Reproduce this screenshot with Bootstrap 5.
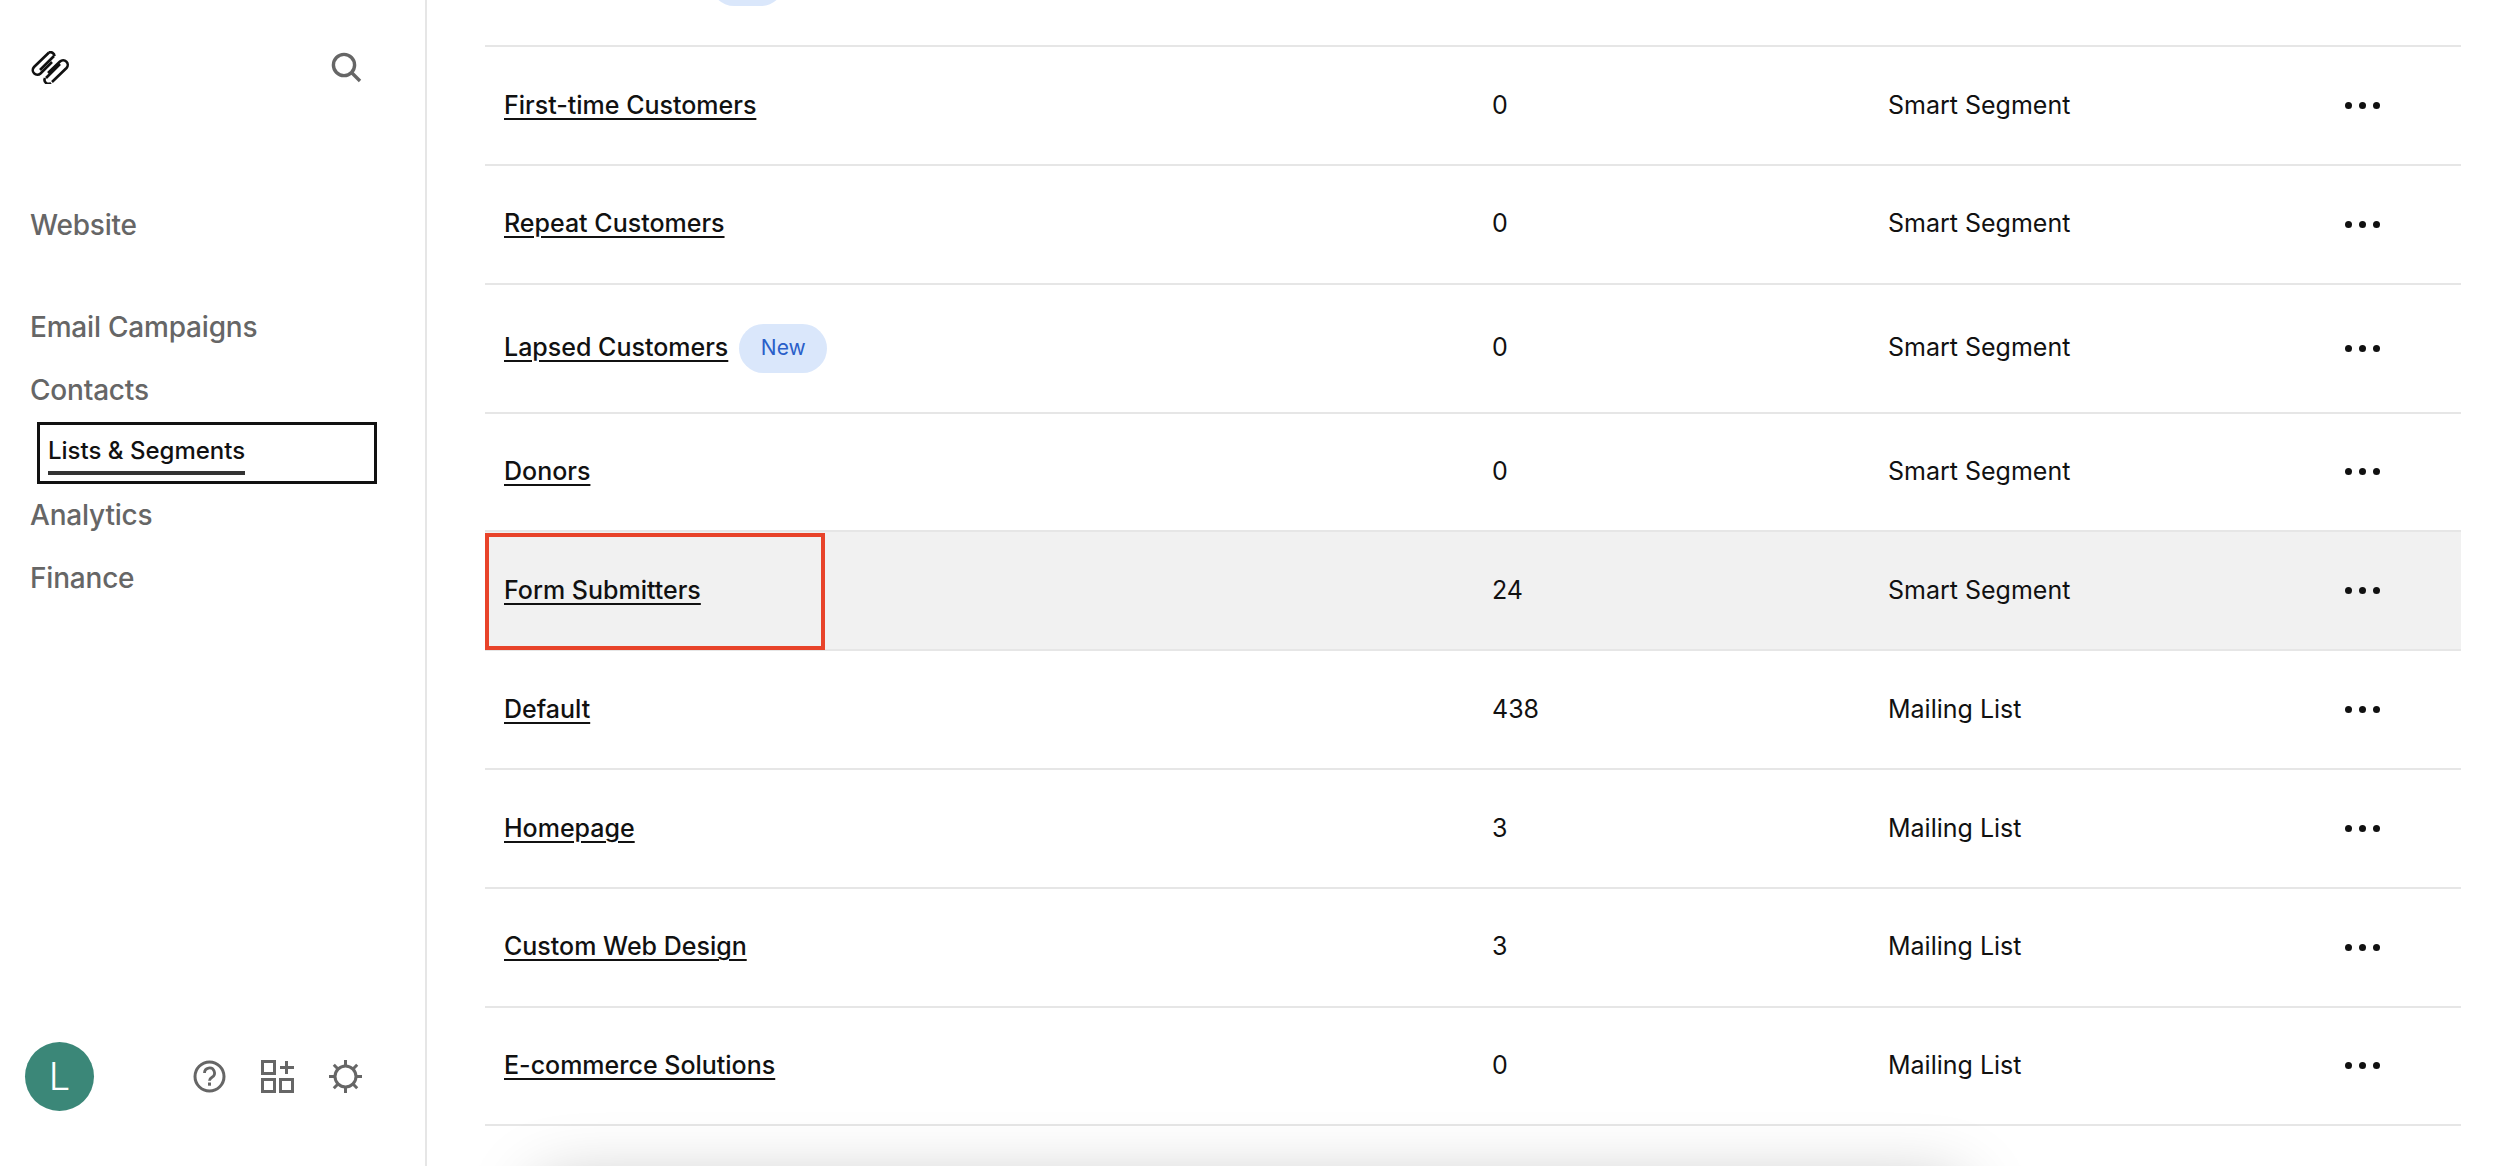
<!DOCTYPE html>
<html lang="en">
<head>
  <meta charset="UTF-8" />
  <meta name="viewport" content="width=device-width, initial-scale=1.0">
  <title>Lists &amp; Segments</title>
  <link href="https://cdn.jsdelivr.net/npm/bootstrap@5.3.0/dist/css/bootstrap.min.css" rel="stylesheet">
  <style>
    body {
      font-family: Inter, "Liberation Sans", sans-serif;
      color: #111;
      background: #fff;
      height: 100vh;
      overflow: hidden;
    }

    /* Sidebar */
    .side-panel {
      width: 427px;
      height: 100vh;
      border-right: 2px solid #e6e6e6;
      padding: 51px 0 55px 0;
      flex-shrink: 0;
    }
    .side-top { padding: 0 63px 0 30px; height: 33px; }
    .side-links { margin-top: 110px; }
    .side-link {
      display: block;
      height: 63px;
      line-height: 63px;
      margin-left: 30px;
      font-size: 28px;
      font-weight: 500;
      color: #666;
      text-decoration: none;
      letter-spacing: -0.2px;
    }
    .side-gap { margin-top: 39px; }
    .side-focus {
      margin: 0 0 0 37px;
      width: 340px;
      height: 62px;
      border: 3px solid #111;
      padding: 0 8px;
      display: block;
      color: #111;
      font-size: 24px;
      font-weight: 500;
      line-height: 52px;
      text-decoration: none;
    }
    .side-focus span {
      display: inline-block;
      height: 50px;
      border-bottom: 4px solid #333;
    }
    .side-foot { padding: 0 63px 0 25px; margin-top: auto; }
    .side-avatar {
      width: 69px;
      height: 69px;
      background: #3b8778;
      color: #fff;
      font-size: 38px;
      font-weight: 300;
    }
    .foot-icons { gap: 35px; }

    /* Segment table */
    .seg-main { padding: 0 39px 0 58px; }
    .seg-row {
      height: 118.8px;
      border-bottom: 2px solid #e6e6e6;
      font-size: 25px;
      position: relative;
    }
    .seg-row-clip { height: 47px; overflow: hidden; align-items: flex-start; }
    .seg-row-tall { height: 129px; }
    .seg-row-active { background: #f1f1f1; }
    .seg-name { width: 1007px; padding-left: 19px; flex-shrink: 0; }
    .seg-name a {
      color: #111;
      font-weight: 500;
      text-decoration: underline;
      text-decoration-thickness: 2px;
      text-underline-offset: 4px;
    }
    .seg-count { width: 396px; flex-shrink: 0; }
    .seg-more { width: 116px; flex-shrink: 0; gap: 7px; }
    .seg-dot { width: 7px; height: 7px; border-radius: 50%; background: #111; }
    .seg-pill {
      background: #dae7fb;
      color: #2a5fc9;
      font-size: 21px;
      width: 88px;
      height: 49px;
      margin-left: 11px;
      border-radius: 25px;
    }
    .seg-pill-cut { width: 75px; margin: -43px 0 0 225px; }
    .red-box {
      position: absolute;
      left: 0;
      top: 1px;
      width: 340px;
      height: 117px;
      border: 4px solid #e8432a;
    }
    .fade-shadow {
      position: fixed;
      left: 560px;
      top: 1206px;
      width: 1380px;
      height: 60px;
      box-shadow: 0 0 70px 20px rgba(0, 0, 0, 0.28);
    }
  </style>
</head>
<body>
  <div class="d-flex">
    <!-- Sidebar -->
    <nav class="side-panel d-flex flex-column">
      <div class="side-top d-flex justify-content-between align-items-center">
        <svg width="40" height="33" viewBox="0 0 40 33" fill="none" stroke="#111" stroke-width="2.6" stroke-linecap="butt">
          <path d="M19 1.5 L4 16 a4.6 4.6 0 0 0 6.5 6.5 L22 11"/>
          <path d="M24 5 L10 19"/>
          <path d="M16 27 L30 13"/>
          <path d="M18 22 L30 10.5 a4.6 4.6 0 0 1 6.5 6.5 L22 31"/>
          <path d="M21 32 a4 4 0 0 1 -6 -5"/>
          <path d="M19 1.5 a4 4 0 0 1 5.5 3.5"/>
        </svg>
        <svg width="31" height="31" viewBox="0 0 31 31" fill="none" stroke="#666" stroke-width="3.4">
          <circle cx="13" cy="13" r="10.6"/>
          <path d="M20.5 20.5 L29 29"/>
        </svg>
      </div>
      <div class="side-links">
        <a class="side-link" href="#">Website</a>
        <a class="side-link side-gap" href="#">Email Campaigns</a>
        <a class="side-link" href="#">Contacts</a>
        <a class="side-focus" href="#"><span>Lists &amp; Segments</span></a>
        <a class="side-link" href="#">Analytics</a>
        <a class="side-link" href="#">Finance</a>
      </div>
      <div class="side-foot d-flex justify-content-between align-items-center">
        <div class="side-avatar rounded-circle d-flex align-items-center justify-content-center">L</div>
        <div class="foot-icons d-flex align-items-center">
          <svg width="33" height="33" viewBox="0 0 33 33" fill="none" stroke="#666" stroke-width="3">
            <circle cx="16.5" cy="16.5" r="14.5"/>
            <path d="M11.5 13 a5 5 0 1 1 7.5 4.3 c-1.6 1 -2.5 1.7 -2.5 3.4" stroke-width="2.8"/>
            <path d="M16.5 22.5 v3.2" stroke-width="3"/>
          </svg>
          <svg width="33" height="33" viewBox="0 0 33 33" fill="none" stroke="#666" stroke-width="3">
            <rect x="1.5" y="1.5" width="12" height="12"/>
            <rect x="1.5" y="19.5" width="12" height="12"/>
            <rect x="19.5" y="19.5" width="12" height="12"/>
            <path d="M25.5 1 v13 M19 7.5 h14"/>
          </svg>
          <svg width="33" height="33" viewBox="0 0 33 33" fill="none" stroke="#666" stroke-width="3">
            <circle cx="16.5" cy="16.5" r="10.5"/>
            <path d="M16.5 0 v6 M16.5 27 v6 M0 16.5 h6 M27 16.5 h6 M4.8 4.8 l4.2 4.2 M24 24 l4.2 4.2 M28.2 4.8 l-4.2 4.2 M9 24 l-4.2 4.2"/>
          </svg>
        </div>
      </div>
    </nav>

    <!-- Segment list -->
    <main class="seg-main flex-grow-1" id="seg-list"></main>
  </div>

  <div class="fade-shadow"></div>

  <script src="https://cdn.jsdelivr.net/npm/bootstrap@5.3.0/dist/js/bootstrap.bundle.min.js"></script>
  <script>
    const segments = [
      { name: 'First-time Customers', count: 0, type: 'Smart Segment' },
      { name: 'Repeat Customers', count: 0, type: 'Smart Segment' },
      { name: 'Lapsed Customers', count: 0, type: 'Smart Segment', isNew: true },
      { name: 'Donors', count: 0, type: 'Smart Segment' },
      { name: 'Form Submitters', count: 24, type: 'Smart Segment', active: true },
      { name: 'Default', count: 438, type: 'Mailing List' },
      { name: 'Homepage', count: 3, type: 'Mailing List' },
      { name: 'Custom Web Design', count: 3, type: 'Mailing List' },
      { name: 'E-commerce Solutions', count: 0, type: 'Mailing List' }
    ];

    const list = document.getElementById('seg-list');
    // row scrolled off the top, only the bottom of its pill still shows
    list.innerHTML = '<div class="seg-row seg-row-clip d-flex"><span class="seg-pill seg-pill-cut d-block"></span></div>';

    segments.forEach(seg => {
      const row = document.createElement('div');
      row.className = 'seg-row d-flex align-items-center';
      if (seg.isNew) row.classList.add('seg-row-tall');
      if (seg.active) row.classList.add('seg-row-active');
      row.innerHTML = `
        <div class="seg-name d-flex align-items-center">
          <a href="#">${seg.name}</a>
          ${seg.isNew ? '<span class="seg-pill d-flex align-items-center justify-content-center">New</span>' : ''}
        </div>
        <div class="seg-count">${seg.count}</div>
        <div class="flex-grow-1">${seg.type}</div>
        <div class="seg-more d-flex align-items-center">
          <span class="seg-dot"></span><span class="seg-dot"></span><span class="seg-dot"></span>
        </div>
        ${seg.active ? '<div class="red-box"></div>' : ''}
      `;
      list.appendChild(row);
    });
  </script>
</body>
</html>
